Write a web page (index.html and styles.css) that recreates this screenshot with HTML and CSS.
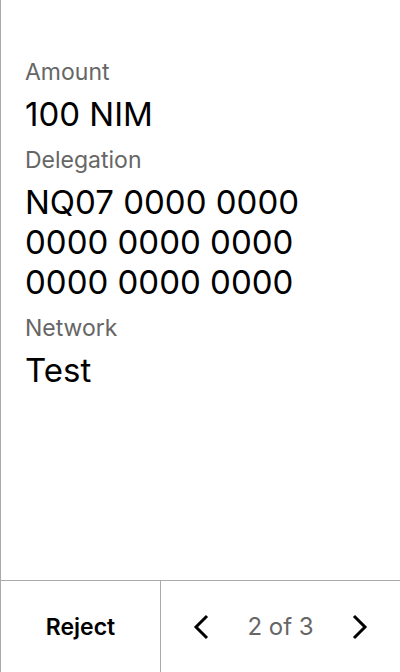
FILE: index.html
```html
<!DOCTYPE html>
<html>
<head>
<meta charset="utf-8">
<link rel="stylesheet" href="styles.css">
</head>
<body>
<div class="screen">
  <main class="content">
    <div class="field">
      <div class="label">Amount</div>
      <div class="value">100 NIM</div>
    </div>
    <div class="field">
      <div class="label">Delegation</div>
      <div class="value">NQ07 0000 0000<br>0000 0000 0000<br>0000 0000 0000</div>
    </div>
    <div class="field">
      <div class="label">Network</div>
      <div class="value">Test</div>
    </div>
  </main>
  <footer class="bar">
    <button class="reject">Reject</button>
    <div class="pager">
      <svg class="chev" width="20" height="28" viewBox="0 0 20 28"><path d="M15 3 L4 14 L15 25" fill="none" stroke="#000" stroke-width="3"/></svg>
      <span class="count">2 of 3</span>
      <svg class="chev" width="20" height="28" viewBox="0 0 20 28"><path d="M5 3 L16 14 L5 25" fill="none" stroke="#000" stroke-width="3"/></svg>
    </div>
  </footer>
</div>
</body>
</html>
```

FILE: styles.css
```css
html, body {
  margin: 0;
  padding: 0;
  background: #fff;
}
body {
  font-family: Inter, "Noto Sans", sans-serif;
  color: #000;
}
.screen {
  width: 400px;
  height: 672px;
  box-sizing: border-box;
  border-left: 1px solid #aaa;
  display: flex;
  flex-direction: column;
}
.content {
  flex: 1;
  padding: 56px 24px 0 24px;
}
.field .label {
  font-size: 23px;
  line-height: 32px;
  color: #666;
  margin-bottom: 6px;
}
.field .value {
  font-size: 33px;
  line-height: 40px;
  color: #000;
  margin-bottom: 10px;
}
.bar {
  height: 92px;
  box-sizing: border-box;
  border-top: 1px solid #aaa;
  display: flex;
}
.reject {
  box-sizing: content-box;
  width: 159px;
  border: none;
  border-right: 1px solid #aaa;
  background: #fff;
  font-family: inherit;
  font-size: 23px;
  font-weight: 600;
  color: #000;
  padding: 0;
}
.pager {
  flex: 1;
  display: flex;
  align-items: center;
  justify-content: space-between;
  padding: 0 31px 0 31px;
}
.count {
  font-size: 24px;
  color: #666;
}
.chev {
  display: block;
}
```
